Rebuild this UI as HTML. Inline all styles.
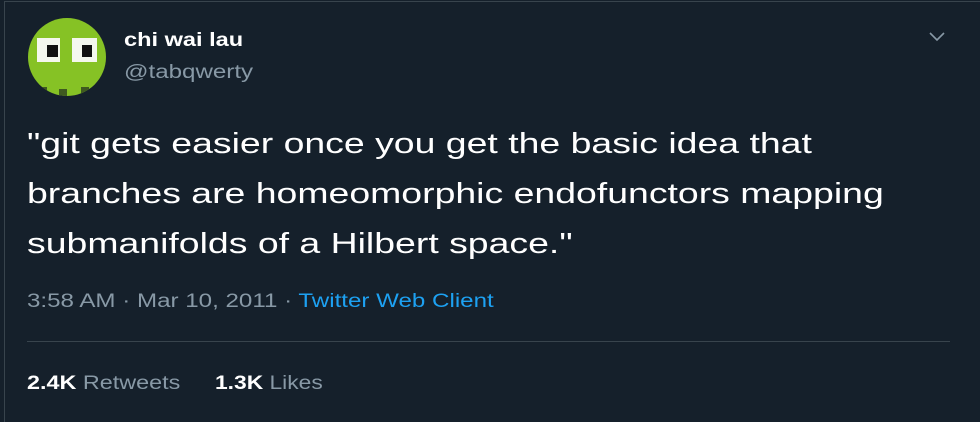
<!DOCTYPE html>
<html><head><style>
body{margin:0;width:980px;height:422px;background:#15202b;font-family:"Liberation Sans",sans-serif;overflow:hidden;position:relative}
.frame{position:absolute;left:4px;top:1px;right:0;bottom:0;border-left:1px solid #38444d;border-top:1px solid #38444d}
.t{position:absolute;white-space:nowrap;transform-origin:0 0}
</style></head><body>
<div class="frame"></div>
<svg class="t" style="left:27px;top:17px" width="80" height="80" viewBox="0 0 80 80">
<defs><clipPath id="c"><circle cx="40" cy="40" r="39"/></clipPath></defs>
<g clip-path="url(#c)">
<rect width="80" height="80" fill="#86c225"/>
<rect x="10" y="21" width="23" height="24" fill="#f4f7ee"/>
<rect x="45" y="21" width="25" height="24" fill="#f4f7ee"/>
<rect x="20" y="28" width="11" height="12" fill="#111"/>
<rect x="55" y="28" width="10" height="12" fill="#111"/>
<rect x="12" y="70" width="8" height="10" fill="#3f5a20"/>
<rect x="32" y="72" width="8" height="8" fill="#3f5a20"/>
<rect x="54" y="70" width="8" height="10" fill="#3f5a20"/>
</g></svg>
<div class="t" style="left:124px;top:30px;font-size:19px;font-weight:bold;color:#fff;transform:scaleX(1.24)">chi wai lau</div>
<div class="t" style="left:124px;top:62px;font-size:19px;color:#8899a6;transform:scaleX(1.27)">@tabqwerty</div>
<svg class="t" style="left:928px;top:29px" width="18" height="14" viewBox="0 0 18 14"><path d="M2 4l7 7 7-7" fill="none" stroke="#8899a6" stroke-width="1.6"/></svg>
<div class="t" style="left:27px;top:119px;font-size:29px;line-height:50px;color:#fff;transform:scaleX(1.29)">"git gets easier once you get the basic idea that<br>branches are homeomorphic endofunctors mapping<br>submanifolds of a Hilbert space."</div>
<div class="t" style="left:27px;top:291px;font-size:19px;color:#8899a6;transform:scaleX(1.27)">3:58 AM · Mar 10, 2011 · <span style="color:#1da1f2">Twitter Web Client</span></div>
<div class="t" style="left:27px;top:341px;width:923px;height:1px;background:#38444d"></div>
<div class="t" style="left:27px;top:373px;font-size:19px;color:#8899a6;transform:scaleX(1.23)"><b style="color:#fff">2.4K</b> Retweets</div>
<div class="t" style="left:215px;top:373px;font-size:19px;color:#8899a6;transform:scaleX(1.2)"><b style="color:#fff">1.3K</b> Likes</div>
</body></html>
